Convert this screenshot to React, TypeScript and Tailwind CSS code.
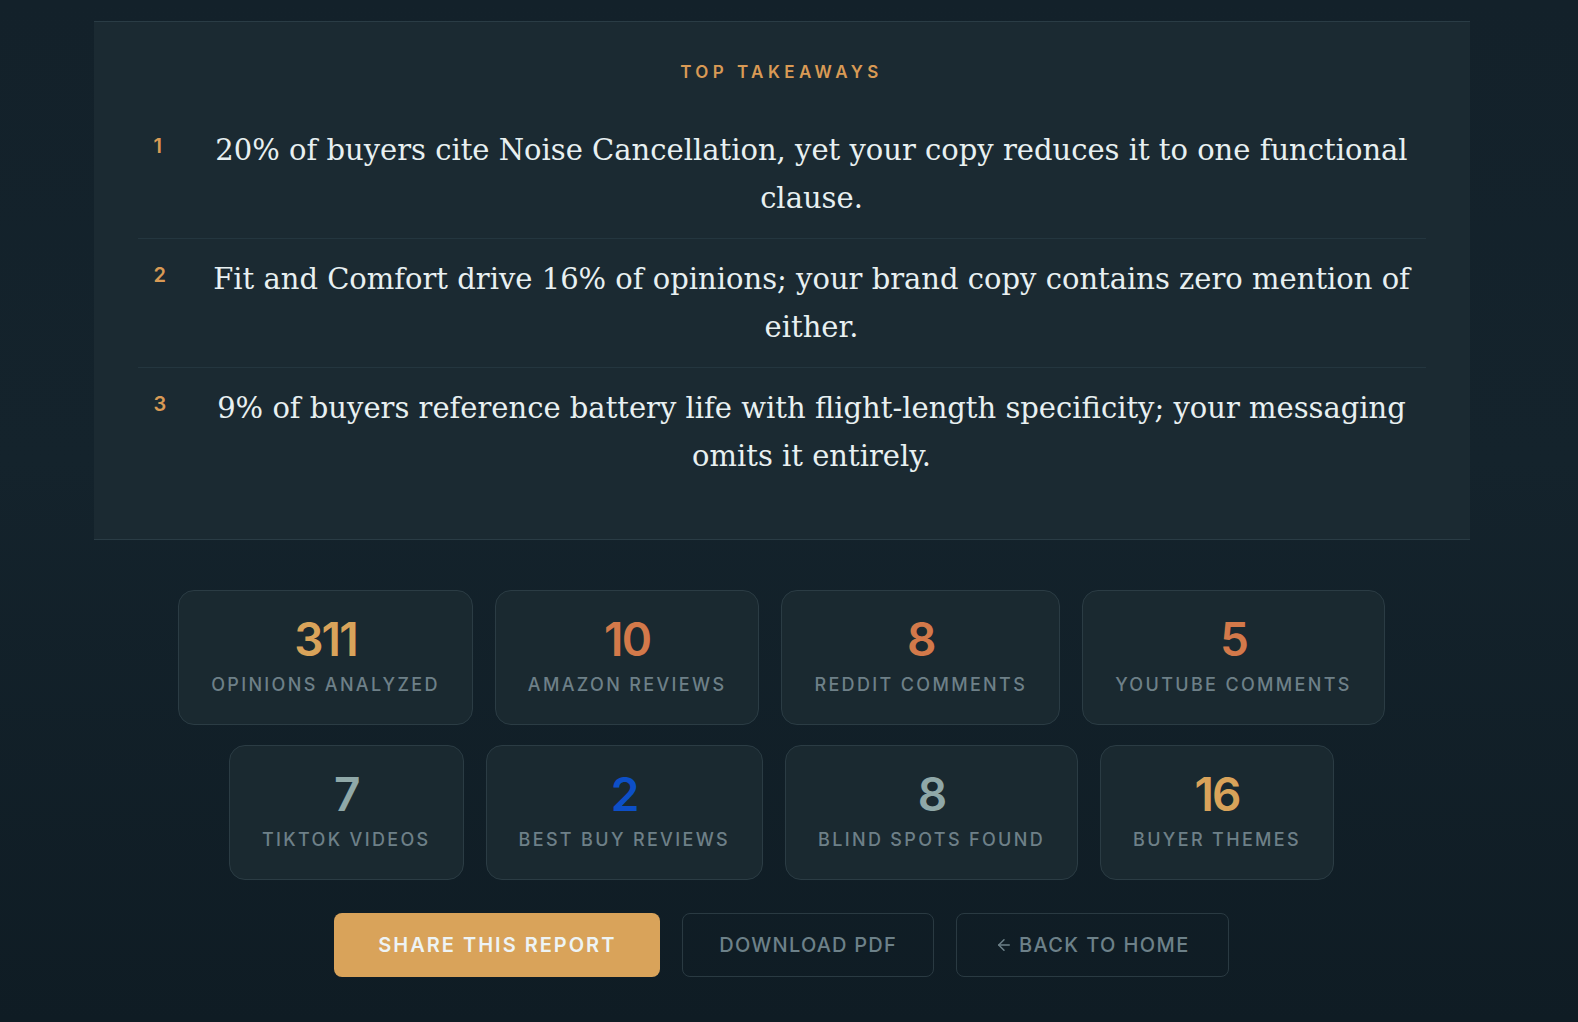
import { ArrowLeft } from "lucide-react";

type Takeaway = { n: number; text: string };
type Stat = { value: string; label: string; color: string };

const takeaways: Takeaway[] = [
  {
    n: 1,
    text: "20% of buyers cite Noise Cancellation, yet your copy reduces it to one functional clause.",
  },
  {
    n: 2,
    text: "Fit and Comfort drive 16% of opinions; your brand copy contains zero mention of either.",
  },
  {
    n: 3,
    text: "9% of buyers reference battery life with flight-length specificity; your messaging omits it entirely.",
  },
];

const topStats: Stat[] = [
  { value: "311", label: "Opinions Analyzed", color: "text-[#d9a35a]" },
  { value: "10", label: "Amazon Reviews", color: "text-[#d3794a]" },
  { value: "8", label: "Reddit Comments", color: "text-[#d3794a]" },
  { value: "5", label: "YouTube Comments", color: "text-[#d3794a]" },
];

const bottomStats: Stat[] = [
  { value: "7", label: "TikTok Videos", color: "text-[#8fa8a8]" },
  { value: "2", label: "Best Buy Reviews", color: "text-[#0d4fc7]" },
  { value: "8", label: "Blind Spots Found", color: "text-[#8fa8a8]" },
  { value: "16", label: "Buyer Themes", color: "text-[#d9a35a]" },
];

const sans = "font-['Inter','Liberation_Sans',sans-serif]";

function StatCard({ stat }: { stat: Stat }) {
  return (
    <div className="flex flex-col items-center rounded-[16px] border border-[#2b3c44] bg-[#1a2930] px-8 pb-[27px] pt-6">
      <span className={`${sans} text-[46px] font-semibold leading-[48px] tracking-[-0.04em] ${stat.color}`}>
        {stat.value}
      </span>
      <span className={`${sans} mt-[10px] whitespace-nowrap text-[18px] font-medium uppercase leading-6 tracking-[0.13em] text-[#6e8088]`}>
        {stat.label}
      </span>
    </div>
  );
}

export default function App() {
  return (
    <div className="min-h-[1022px] bg-[linear-gradient(180deg,#13212a_0%,#14232c_45%,#0f1c24_100%)] pr-[15px] pt-[21px]">
      <div className="mx-auto w-[1376px]">
        <section className="border-y border-[#2a3c45] bg-[#1b2a32] px-11 pb-[43px] pt-10">
          <h2 className={`${sans} text-center text-[17px] font-semibold uppercase leading-5 tracking-[0.26em] text-[#d99a55]`}>
            Top Takeaways
          </h2>

          <ol className="mt-7">
            {takeaways.map((item, i) => (
              <li
                key={item.n}
                className={`flex items-start gap-4 py-4 pl-4 ${i > 0 ? "border-t border-[#24363f]" : ""}`}
              >
                <span className={`${sans} w-7 shrink-0 text-[20px] font-semibold leading-[40px] text-[#d99a55]`}>
                  {item.n}
                </span>
                <p className="flex-1 text-center font-['DejaVu_Serif',serif] text-[29px] leading-[48px] text-[#e8f0f1]">
                  {item.text}
                </p>
              </li>
            ))}
          </ol>
        </section>

        <div className="mt-[50px] flex flex-col items-center gap-[20px]">
          <div className="flex justify-center gap-[22px]">
            {topStats.map((s) => (
              <StatCard key={s.label} stat={s} />
            ))}
          </div>
          <div className="flex justify-center gap-[22px]">
            {bottomStats.map((s) => (
              <StatCard key={s.label} stat={s} />
            ))}
          </div>
        </div>

        <div className={`${sans} mt-[33px] flex justify-center gap-[22px]`}>
          <button className="h-16 rounded-[8px] bg-[#d9a35a] px-11 text-[20px] font-semibold uppercase tracking-[0.1em] text-[#eef4f5]">
            Share This Report
          </button>
          <button className="h-16 rounded-[8px] border border-[#2a3a42] px-9 text-[20px] font-medium uppercase tracking-[0.06em] text-[#6d8189]">
            Download PDF
          </button>
          <button className="flex h-16 items-center gap-1.5 rounded-[8px] border border-[#2a3a42] px-[38px] text-[20px] font-medium uppercase tracking-[0.07em] text-[#6d8189]">
            <ArrowLeft size={18} strokeWidth={2} />
            Back to Home
          </button>
        </div>
      </div>
    </div>
  );
}
